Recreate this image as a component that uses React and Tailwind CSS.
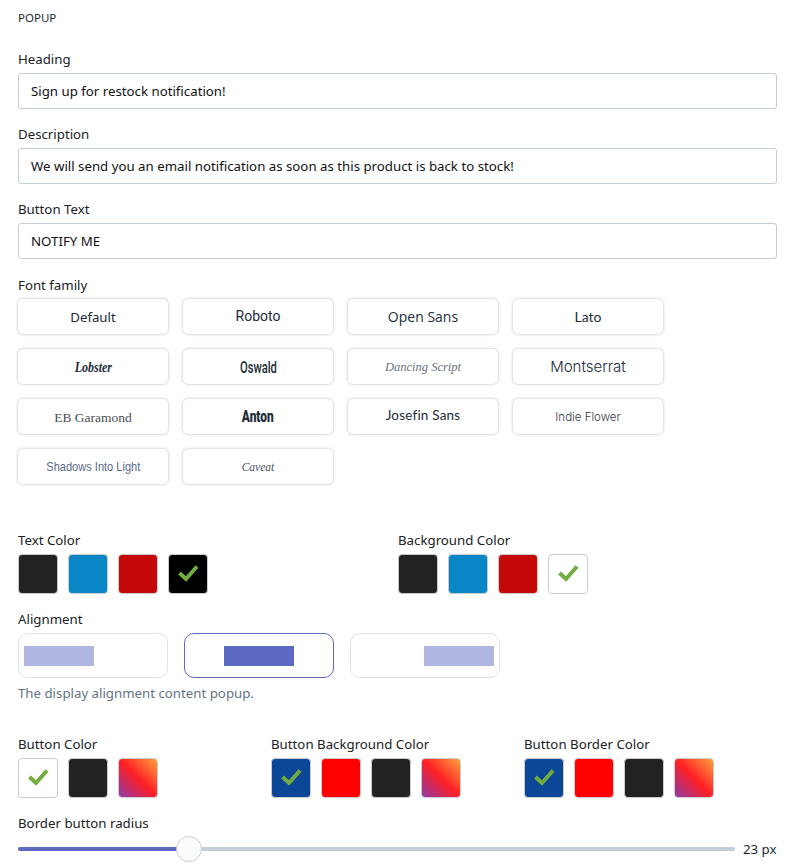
import React from 'react';

const fonts = [
  { name: 'Default', cls: "font-['Noto_Sans',sans-serif] text-[13.25px] translate-y-px" },
  { name: 'Roboto', cls: "font-['Roboto',sans-serif] text-[14px]" },
  { name: 'Open Sans', cls: "font-['Open_Sans',sans-serif] text-[14px]" },
  { name: 'Lato', cls: "font-['Lato',sans-serif] text-[14px]" },
  { name: 'Lobster', cls: "font-['Liberation_Serif',serif] font-bold italic text-[15px] scale-x-[.8] translate-y-px" },
  { name: 'Oswald', cls: "font-['Roboto',sans-serif] font-medium text-[16px] scale-x-[.7] translate-y-px" },
  { name: 'Dancing Script', cls: "font-['Liberation_Serif',serif] italic text-[12.5px] text-[#6b7280] translate-y-px" },
  { name: 'Montserrat', cls: "font-['Inter',sans-serif] font-light text-[15px] translate-y-px" },
  { name: 'EB Garamond', cls: "font-['Liberation_Serif',serif] text-[13.5px] text-[#4b4f54] translate-y-[2px]" },
  { name: 'Anton', cls: "font-['Roboto',sans-serif] font-black text-[17px] scale-x-[.7]" },
  { name: 'Josefin Sans', cls: "font-['Lato',sans-serif] text-[13.5px] tracking-[.2px] -translate-y-px" },
  { name: 'Indie Flower', cls: "font-['Inter',sans-serif] font-light text-[11.5px] text-[#333a44] translate-y-px" },
  { name: 'Shadows Into Light', cls: "font-['Liberation_Sans',sans-serif] text-[13px] text-[#5b6b8a] scale-x-[.85]" },
  { name: 'Caveat', cls: "font-['Liberation_Serif',serif] italic text-[11.5px] text-[#4b5563] translate-y-px" },
];

const RAINBOW = 'bg-[linear-gradient(to_top_right,#8e3aa8_0%,#ff1f25_50%,#ffa23c_100%)]';

const Label = ({ children, className = '' }) => (
  <div className={`text-[13.25px] leading-[20px] text-[#202223] ${className}`}>{children}</div>
);

function Field({ label, value }) {
  return (
    <div>
      <Label>{label}</Label>
      <div className="mt-1 h-[36px] rounded-[3px] border border-[#c4cdd5] px-3 text-[13.25px] leading-[34px] text-[#111213]">
        {value}
      </div>
    </div>
  );
}

function Swatch({ bg, checked }) {
  return (
    <div className={`flex h-[40px] w-[40px] items-center justify-center rounded-[4px] border border-[#c9cccf] ${bg}`}>
      {checked && (
        <svg width="22" height="18" viewBox="0 0 22 18" fill="none" className="overflow-visible">
          <path d="M2.5 8 L9 14 L20 1.5" stroke="#72ab3f" strokeWidth="4" />
        </svg>
      )}
    </div>
  );
}

function SwatchGroup({ label, items, className = '' }) {
  return (
    <div className={className}>
      <Label>{label}</Label>
      <div className="mt-1 flex gap-[10px]">
        {items.map((s, i) => <Swatch key={i} bg={s.bg} checked={s.checked} />)}
      </div>
    </div>
  );
}

function AlignBox({ justify, active }) {
  return (
    <div className={`flex h-[45px] w-[150px] items-center rounded-[10px] border px-[5px] ${justify} ${active ? 'border-[#5c6ac4]' : 'border-[#dfe3e8]'}`}>
      <div className={`h-[20px] w-[70px] ${active ? 'bg-[#5c6ac4]' : 'bg-[#b0b6e1]'}`} />
    </div>
  );
}

export default function App() {
  return (
    <div className="h-[866px] w-[792px] overflow-hidden bg-white pl-[18px] pr-[15px] pt-[10px] font-['Noto_Sans',sans-serif]">
      <div className="text-[11.5px] leading-[16px] text-[#212b36]">POPUP</div>

      <div className="mt-[23px] flex flex-col gap-[15px]">
        <Field label="Heading" value="Sign up for restock notification!" />
        <Field label="Description" value="We will send you an email notification as soon as this product is back to stock!" />
        <Field label="Button Text" value="NOTIFY ME" />
      </div>

      <Label className="mt-[16px]">Font family</Label>
      <div className="mt-1 grid w-[646px] grid-cols-[repeat(4,150px)] gap-x-[15px] gap-y-[15px]">
        {fonts.map((f) => (
          <div key={f.name} className="flex h-[35px] items-center justify-center rounded-[5px] bg-white text-[#212b36] shadow-[0_0_3px_rgba(0,0,0,0.3)]">
            <span className={`inline-block whitespace-nowrap ${f.cls}`}>{f.name}</span>
          </div>
        ))}
      </div>

      <div className="mt-[46px] flex">
        <SwatchGroup
          className="w-[380px]"
          label="Text Color"
          items={[{ bg: 'bg-[#222222]' }, { bg: 'bg-[#0886c6]' }, { bg: 'bg-[#c50808]' }, { bg: 'bg-black', checked: true }]}
        />
        <SwatchGroup
          label="Background Color"
          items={[{ bg: 'bg-[#222222]' }, { bg: 'bg-[#0886c6]' }, { bg: 'bg-[#c50808]' }, { bg: 'bg-white', checked: true }]}
        />
      </div>

      <Label className="mt-[15px]">Alignment</Label>
      <div className="mt-1 flex gap-[16px]">
        <AlignBox justify="justify-start" />
        <AlignBox justify="justify-center" active />
        <AlignBox justify="justify-end" />
      </div>
      <div className="mt-[5px] text-[13.25px] leading-[20px] text-[#637381]">The display alignment content popup.</div>

      <div className="mt-[31px] flex">
        <SwatchGroup
          className="w-[253px]"
          label="Button Color"
          items={[{ bg: 'bg-white', checked: true }, { bg: 'bg-[#222222]' }, { bg: RAINBOW }]}
        />
        <SwatchGroup
          className="w-[253px]"
          label="Button Background Color"
          items={[{ bg: 'bg-[#0c4697]', checked: true }, { bg: 'bg-[#fe0000]' }, { bg: 'bg-[#222222]' }, { bg: RAINBOW }]}
        />
        <SwatchGroup
          label="Button Border Color"
          items={[{ bg: 'bg-[#0c4697]', checked: true }, { bg: 'bg-[#fe0000]' }, { bg: 'bg-[#222222]' }, { bg: RAINBOW }]}
        />
      </div>

      <Label className="mt-[15px]">Border button radius</Label>
      <div className="mt-[3px] flex h-[26px] items-center">
        <div className="relative h-[4px] w-[717px] shrink-0 rounded-full bg-[#c4cdd5]">
          <div className="h-full w-[171px] rounded-l-full bg-[#5c6ac4]" />
          <div className="absolute left-[158px] top-[-11px] h-[26px] w-[26px] rounded-full border border-[#c4cdd5] bg-[#fafbfb]" />
        </div>
        <div className="ml-[8px] shrink-0 whitespace-nowrap text-[13.25px] leading-[20px] text-[#212b36]">23 px</div>
      </div>
    </div>
  );
}
